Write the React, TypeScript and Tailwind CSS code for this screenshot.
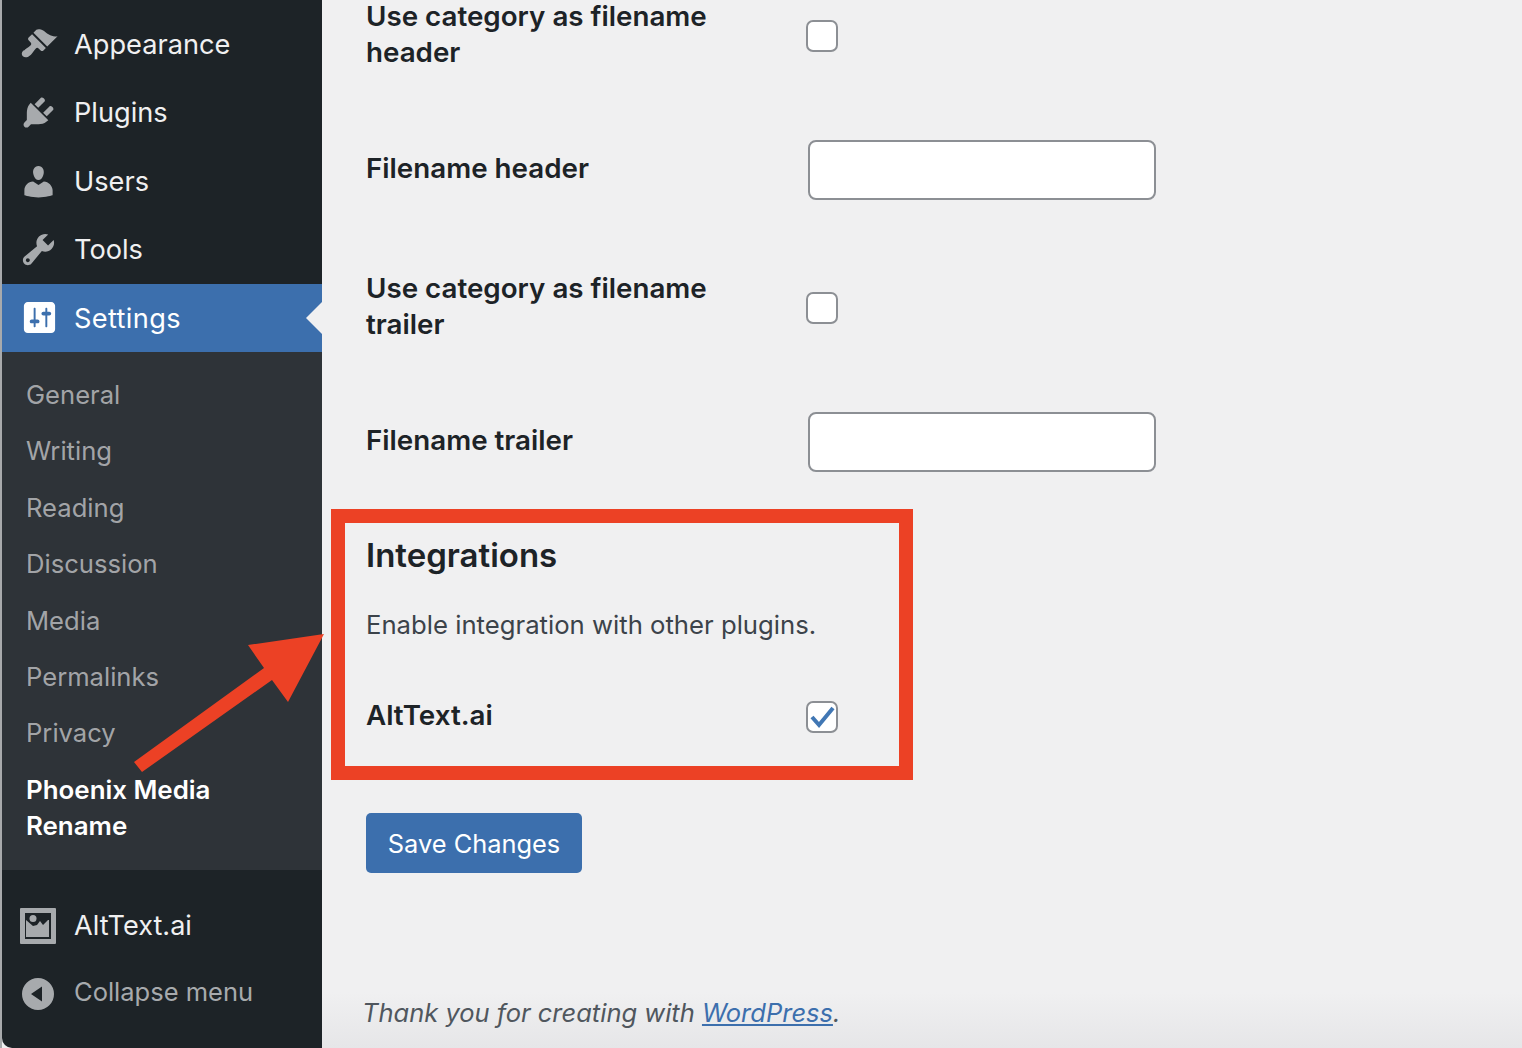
import type { ReactNode } from "react";

const FONT = "font-['Inter','Liberation_Sans',sans-serif]";

function Dashicon({ d, className }: { d: string; className: string }) {
  return (
    <svg viewBox="0 0 20 20" className={className} fill="currentColor">
      <path fillRule="evenodd" d={d} />
    </svg>
  );
}

const topItems = [
  {
    label: "Appearance",
    d: "M14.48 11.06L7.41 3.99l1.5-1.5c.5-.56 2.3-.47 3.51.32 1.21.8 1.43 1.28 2.91 2.1 1.18.64 2.45 1.26 4.45.85zm-.71.71L6.7 4.7 4.93 6.47c-.39.39-.39 1.02 0 1.41l1.06 1.06c.39.39.39 1.03 0 1.42-.6.6-1.43 1.11-2.21 1.69-.35.26-.7.53-1.01.84C1.43 13.23.99 14.96 2 16c1.01 1.01 2.77.57 4.11-.77.31-.31.58-.66.84-1.01.58-.78 1.09-1.61 1.69-2.21.39-.39 1.03-.39 1.42 0l1.06 1.06c.39.39 1.02.39 1.41 0z",
  },
  {
    label: "Plugins",
    d: "M13.11 4.36L9.87 7.6 8 5.73l3.24-3.24c.35-.34 1.05-.2 1.56.32.52.51.66 1.21.31 1.55zm-8 1.77l.91-1.12 9.01 9.01-1.19.84c-.71.71-2.63 1.16-3.82 1.16H6.14L4.9 17.26c-.59.59-1.54.59-2.12 0-.59-.58-.59-1.53 0-2.12l1.24-1.24v-3.88c0-1.13.4-3.19 1.09-3.89zm7.26 3.97l3.24-3.24c.34-.35 1.04-.21 1.55.31.52.51.66 1.21.31 1.55l-3.24 3.25z",
  },
  {
    label: "Users",
    d: "M10 9.25c-2.27 0-2.73-3.44-2.73-3.44C7 4.02 7.82 2 9.97 2c2.16 0 2.98 2.02 2.71 3.81 0 0-.41 3.44-2.68 3.44zm0 2.57L12.72 10c2.39 0 4.52 2.33 4.52 4.53v2.49s-3.65 1.13-7.24 1.13c-3.65 0-7.24-1.13-7.24-1.13v-2.49c0-2.25 1.94-4.48 4.47-4.48z",
  },
  {
    label: "Tools",
    d: "M16.68 9.77c-1.34 1.34-3.3 1.67-4.95.99l-5.41 6.52c-.99.99-2.59.99-3.58 0s-.99-2.59 0-3.57l6.52-5.42c-.68-1.65-.35-3.61.99-4.95 1.28-1.28 3.12-1.62 4.72-1.06l-2.89 2.89 2.82 2.82 2.86-2.87c.53 1.58.18 3.39-1.08 4.65zM3.81 16.21c.4.39 1.04.39 1.43 0 .4-.4.4-1.04 0-1.43-.39-.4-1.03-.4-1.43 0-.39.39-.39 1.03 0 1.43z",
  },
];

const SETTINGS_D =
  "M18 16V4c0-1.1-.9-2-2-2H4c-1.1 0-2 .9-2 2v12c0 1.1.9 2 2 2h12c1.1 0 2-.9 2-2zM8 11h1c.55 0 1 .45 1 1s-.45 1-1 1H8v1.5c0 .28-.22.5-.5.5s-.5-.22-.5-.5V13H6c-.55 0-1-.45-1-1s.45-1 1-1h1V5.5c0-.28.22-.5.5-.5s.5.22.5.5V11zm5-2h-1c-.55 0-1-.45-1-1s.45-1 1-1h1V5.5c0-.28.22-.5.5-.5s.5.22.5.5V7h1c.55 0 1 .45 1 1s-.45 1-1 1h-1v5.5c0 .28-.22.5-.5.5s-.5-.22-.5-.5V9z";

const subItems = ["General", "Writing", "Reading", "Discussion", "Media", "Permalinks", "Privacy"];

function Checkbox({ checked }: { checked?: boolean }) {
  return (
    <div className="-ml-[2px] flex h-8 w-8 items-center justify-center rounded-[7px] border-2 border-[#8c8f94] bg-white">
      {checked && (
        <svg viewBox="0 0 28 28" className="h-[28px] w-[28px]">
          <path d="M4 14l7 8L25 5" fill="none" stroke="#4177b4" strokeWidth="4" />
        </svg>
      )}
    </div>
  );
}

function TextInput() {
  return <div className="h-[60px] w-[348px] rounded-[8px] border-2 border-[#8c8f94] bg-white" />;
}

function Row({ label, className, children }: { label: ReactNode; className: string; children: ReactNode }) {
  return (
    <div className={`flex items-center ${className}`}>
      <div className="-mt-1 w-[442px] pr-[90px] text-[27.75px] leading-[36px] font-semibold text-[#1d2327]">{label}</div>
      {children}
    </div>
  );
}

export default function App() {
  return (
    <div className={`relative flex h-[1048px] w-[1522px] overflow-hidden bg-[#f0f0f1] ${FONT}`}>
      <div className="w-[2px] shrink-0 bg-[#a8aaac]" />

      {/* Sidebar */}
      <aside className="flex w-[320px] shrink-0 flex-col rounded-bl-[10px] bg-[#1d2327] pt-[10.5px]">
        {topItems.map((item) => (
          <div key={item.label} className="flex h-[68.25px] items-center text-[#f0f0f1]">
            <Dashicon d={item.d} className="ml-[17px] h-[39px] w-[39px] text-[#a7aaad]" />
            <span className="ml-[16px] pt-[2px] text-[27.2px]">{item.label}</span>
          </div>
        ))}
        <div className="relative flex h-[68px] items-center bg-[#3c6fad] text-white">
          <Dashicon d={SETTINGS_D} className="ml-[17px] h-[39px] w-[39px] translate-x-px" />
          <span className="ml-[16px] pt-[4px] text-[27.2px] tracking-[0.35px]">Settings</span>
          <div className="absolute right-0 top-[18px] h-0 w-0 border-y-[16px] border-r-[16px] border-y-transparent border-r-[#f0f0f1]" />
        </div>
        <div className="flex h-[518px] flex-col bg-[#2e3338] pt-[15.5px] text-[25.6px] text-[#c3c4c7]/80">
          {subItems.map((s) => (
            <div key={s} className="flex h-[56.4px] items-center pl-[24px]">
              {s}
            </div>
          ))}
          <div className="pl-[24px] pt-[10px] text-[25.9px] leading-[36px] font-semibold text-white">
            Phoenix Media
            <br />
            Rename
          </div>
        </div>
        <div className="mt-[23px] flex h-[66px] items-center text-[#f0f0f1]">
          <svg viewBox="0 0 36 36" className="ml-[18px] h-[36px] w-[36px] text-[#a7aaad]">
            <path
              fill="currentColor"
              fillRule="evenodd"
              d="M1 0h34a1 1 0 0 1 1 1v34a1 1 0 0 1-1 1H1a1 1 0 0 1-1-1V1a1 1 0 0 1 1-1zM5 5v26h26V5z"
            />
            <circle cx="13" cy="10.5" r="3.5" fill="currentColor" />
            <path fill="currentColor" d="M6 12l7 6 4-1 3-4 3 4 5-5 1 0v17H6z" />
          </svg>
          <span className="ml-[18px] pt-[2px] text-[27.1px]">AltText.ai</span>
        </div>
        <div className="flex h-[66px] items-center text-[#a7aaad]">
          <svg viewBox="0 0 32 32" className="ml-[20px] mt-[4px] h-[32px] w-[32px]">
            <path
              fill="currentColor"
              fillRule="evenodd"
              d="M16 0a16 16 0 1 1 0 32a16 16 0 0 1 0-32zM20 8.5L9 16l11 7.5z"
            />
          </svg>
          <span className="ml-[20px] pt-[2px] text-[25.5px]">Collapse menu</span>
        </div>
      </aside>

      {/* Main settings form */}
      <main className="flex min-w-0 flex-1 flex-col">
        <div className="flex flex-1 flex-col pl-[44px]">
          <Row label="Use category as filename header" className="h-[72px]">
            <Checkbox />
          </Row>
          <Row label="Filename header" className="mt-[68px] h-[60px]">
            <TextInput />
          </Row>
          <Row label="Use category as filename trailer" className="mt-[72px] h-[72px]">
            <Checkbox />
          </Row>
          <Row label="Filename trailer" className="mt-[68px] h-[60px]">
            <TextInput />
          </Row>
          <h2 className="mt-[60px] text-[33px] leading-[46px] font-semibold text-[#1d2327]">Integrations</h2>
          <p className="mt-[29px] text-[25.7px] leading-[36px] text-[#3c434a]">
            Enable integration with other plugins.
          </p>
          <Row label="AltText.ai" className="mt-[56px] h-[36px]">
            <Checkbox checked />
          </Row>
          <button className="mt-[78px] flex h-[60px] w-[216px] items-center justify-center rounded-[5px] bg-[#3c6fad] pt-[2px] text-[25.4px] text-white">
            Save Changes
          </button>
        </div>
        <footer className="h-[56px] bg-gradient-to-b from-[#f0f0f1] to-[#e6e6e8] pl-[40px] pt-[3px] text-[25.5px] leading-[36px] text-[#50575e] italic">
          Thank you for creating with <span className="text-[#3c6fad] underline">WordPress</span>.
        </footer>
      </main>

      {/* Annotation drawn over the page */}
      <div className="absolute left-[331px] top-[509px] h-[271px] w-[582px] border-[14px] border-[#ec4125]" />
      <svg className="absolute left-[130px] top-[630px]" width="200" height="145" viewBox="0 0 200 145">
        <path d="M4 132 L134 38 L118 15 L194 4 L158 72 L142 50 L12 142 Z" fill="#ec4125" />
      </svg>
    </div>
  );
}
